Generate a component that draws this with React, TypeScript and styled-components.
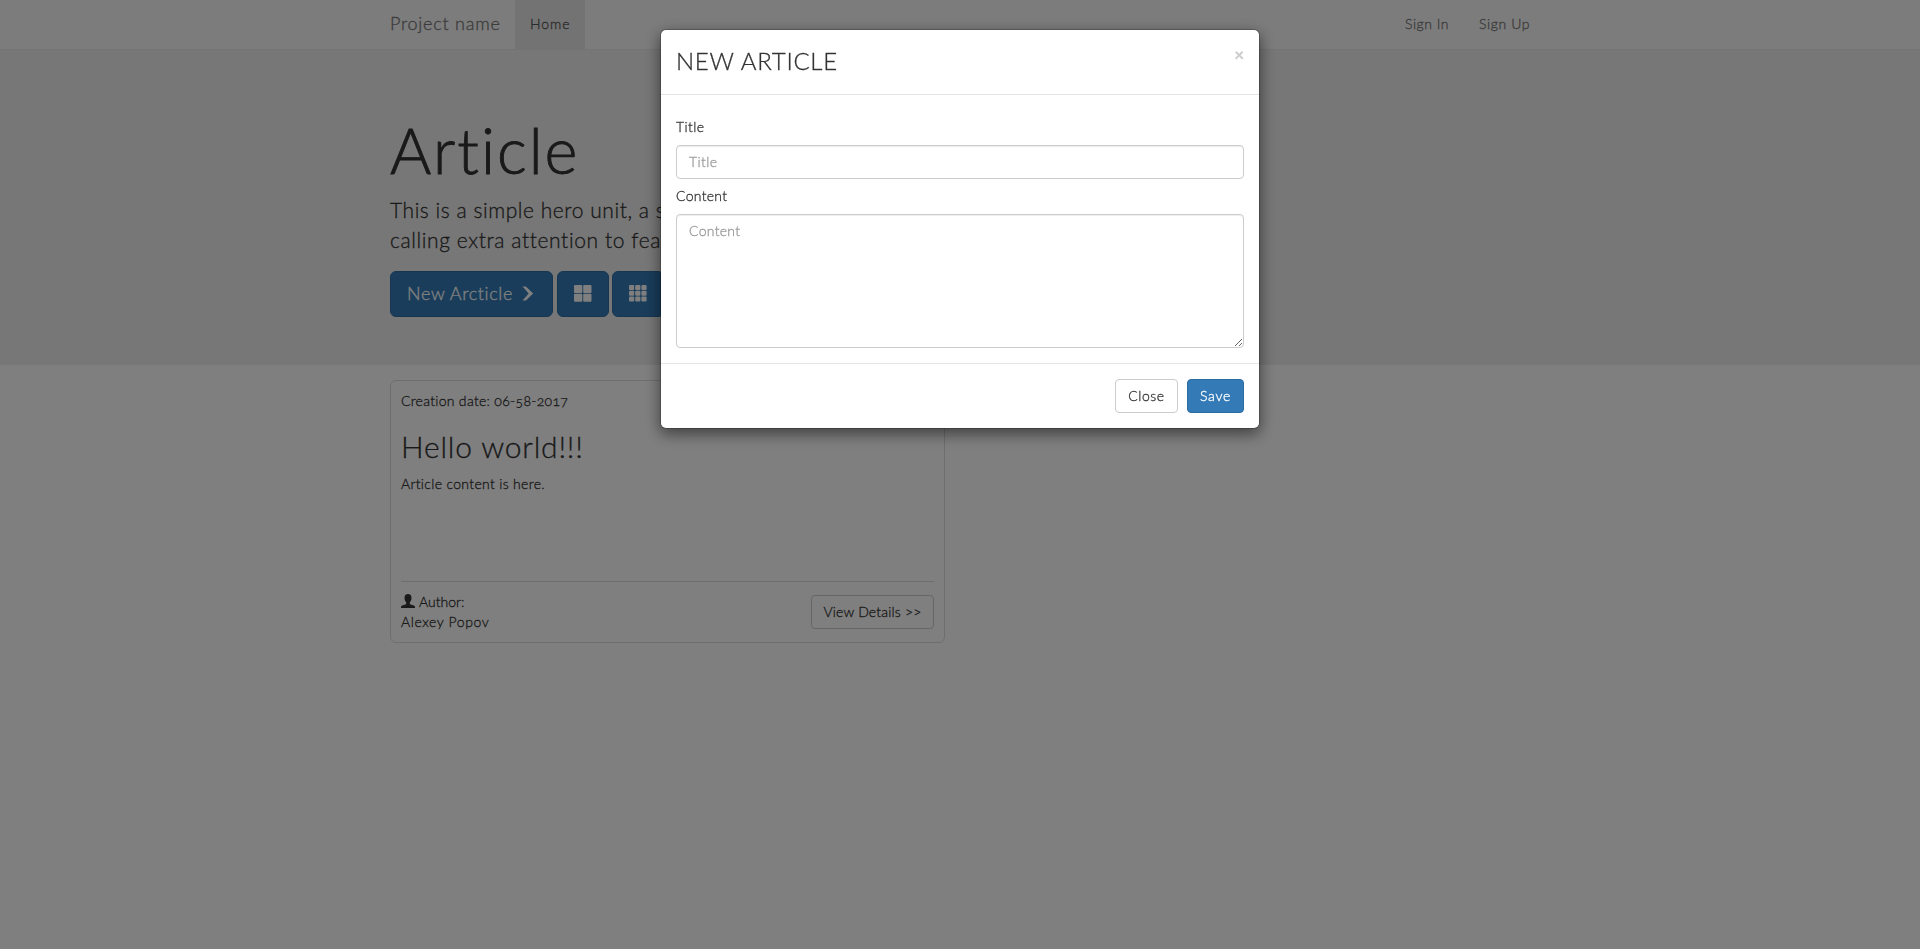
import React from 'react';
import styled, { createGlobalStyle } from 'styled-components';

const GlobalStyle = createGlobalStyle`
  *, *::before, *::after { box-sizing: border-box; }
  body {
    margin: 0;
    background: #fff;
    color: #333;
    font: 300 14px/20px Lato, "Liberation Sans", sans-serif;
    font-variant-ligatures: none;
    -webkit-text-stroke: 0.3px;
  }
  h1, h2, h3, p { margin: 0; font-weight: 300; }
  button, input, textarea { font: inherit; color: inherit; }
`;

const Spaced = styled.span<{ $gap: number }>`
  letter-spacing: ${p => p.$gap}px;
  white-space: nowrap;
`;

const Container = styled.div`
  width: 1170px;
  margin: 0 auto;
  padding: 0 15px;
`;

const Navbar = styled.nav`
  height: 50px;
  background: #f8f8f8;
  border-bottom: 1px solid #e7e7e7;
`;

const NavInner = styled(Container)`
  display: flex;
  height: 49px;
  padding-right: 0;
`;

const Brand = styled.a`
  width: 125px;
  padding: 13px 0;
  color: #777;
  font-size: 18px;
`;

const NavItem = styled.a<{ $width: number; $active?: boolean }>`
  width: ${p => p.$width}px;
  padding: 14px 15px;
  color: ${p => (p.$active ? '#555' : '#777')};
  background: ${p => (p.$active ? '#e7e7e7' : 'transparent')};
`;

const NavRight = styled.div`
  display: flex;
  margin-left: auto;
`;

const Jumbotron = styled.header`
  height: 315px;
  padding-top: 65px;
  background: #eee;
`;

const HeroTitle = styled.h1`
  font-size: 63px;
  line-height: 69px;
  -webkit-text-stroke: 0.9px;
`;

const Lead = styled.p`
  margin: 11px 0 16px;
  font-size: 21px;
  line-height: 30px;
`;

const HeroActions = styled.div`
  display: flex;
  gap: 3px;
`;

const HeroButton = styled.button<{ $width: number }>`
  display: flex;
  align-items: center;
  justify-content: center;
  width: ${p => p.$width}px;
  height: 46px;
  padding: 0 0 2px;
  color: #fff;
  background: #337ab7;
  border: 1px solid #2e6da4;
  border-radius: 6px;
  font-size: 18px;

  svg { display: block; fill: #fff; }
`;

const NewButton = styled(HeroButton)`
  justify-content: flex-start;
  gap: 9px;
  margin-right: 1px;
  padding-left: 16px;
`;

const Card = styled.article`
  width: 555px;
  margin-top: 15px;
  padding: 10px;
  border: 1px solid #ddd;
  border-radius: 6px;
`;

const DateLine = styled.div`
  font-variant-numeric: oldstyle-nums;
`;

const CardTitle = styled.h2`
  margin: 19px 0 11px;
  font-size: 30px;
  line-height: 33px;
`;

const CardBody = styled.p`
  height: 107px;
`;

const CardFooter = styled.footer`
  display: flex;
  justify-content: space-between;
  padding-top: 10px;
  border-top: 1px solid #ddd;
`;

const Author = styled.div`
  svg { display: inline-block; margin-right: 4px; vertical-align: -1px; fill: #333; }
`;

const Button = styled.button<{ $width: number; $primary?: boolean }>`
  width: ${p => p.$width}px;
  height: 34px;
  padding: 6px 0;
  line-height: 20px;
  text-align: center;
  color: ${p => (p.$primary ? '#fff' : '#333')};
  background: ${p => (p.$primary ? '#337ab7' : '#fff')};
  border: 1px solid ${p => (p.$primary ? '#2e6da4' : '#ccc')};
  border-radius: 4px;
`;

const DetailsButton = styled(Button)`
  margin-top: 3px;
`;

const Backdrop = styled.div`
  position: fixed;
  inset: 0;
  background: rgba(0, 0, 0, 0.5);
`;

const Modal = styled.section`
  width: 600px;
  margin: 29px auto;
  background: #fff;
  background-clip: padding-box;
  border: 1px solid rgba(0, 0, 0, 0.2);
  border-radius: 6px;
  box-shadow: 0 5px 15px rgba(0, 0, 0, 0.5);
`;

const ModalHeader = styled.div`
  display: flex;
  justify-content: space-between;
  height: 65px;
  padding: 18px 15px 0;
  border-bottom: 1px solid #e5e5e5;
`;

const ModalTitle = styled.h3`
  font-size: 24px;
  line-height: 25px;
`;

const CloseIcon = styled.button`
  height: 16px;
  margin-top: -2px;
  padding: 0;
  background: none;
  border: 0;
  color: #000;
  opacity: 0.2;
  font-size: 17px;
  font-weight: 900;
  line-height: 15px;
`;

const ModalBody = styled.div`
  display: flex;
  flex-direction: column;
  height: 268px;
  padding: 22px 15px 15px;
`;

const Label = styled.label`
  margin-bottom: 8px;
`;

const Input = styled.input<{ $gap: number }>`
  width: 100%;
  height: 34px;
  margin-bottom: 7px;
  padding: 5px 12px 7px;
  letter-spacing: ${p => p.$gap}px;
  border: 1px solid #ccc;
  border-radius: 4px;
  box-shadow: inset 0 1px 1px rgba(0, 0, 0, 0.075);
  outline: none;
  &::placeholder { color: #999; opacity: 1; }
`;

const TextArea = styled(Input).attrs({ as: 'textarea' })`
  display: block;
  height: 134px;
  margin: 0;
  padding: 6px 12px;
  resize: vertical;
`;

const ModalFooter = styled.div`
  display: flex;
  justify-content: flex-end;
  gap: 9px;
  padding: 15px;
  border-top: 1px solid #e5e5e5;
`;

const ChevronRight = () => (
  <svg width="12" height="15" viewBox="0 0 12 15">
    <path d="M0.5 0.4H3.9L11.2 7.4L3.9 14.5H0.5L6.7 7.4Z" />
  </svg>
);

const Grid = ({ cells, size, step }: { cells: number; size: number; step: number }) => (
  <svg width="18" height="17" viewBox="0 0 18 17">
    {Array.from({ length: cells * cells }, (_, i) => (
      <rect
        key={i}
        x={(i % cells) * step}
        y={Math.floor(i / cells) * (step - 0.4)}
        width={size}
        height={size - 0.3}
        rx="1"
      />
    ))}
  </svg>
);

const UserIcon = () => (
  <svg width="14" height="14" viewBox="0 0 14 14">
    <path d="M7 0C9.3 0 10.5 1.5 10.5 3.8C10.5 5.8 9.7 7.4 8.8 8.3V9.4C8.8 9.9 9.1 10.2 9.6 10.4L12.8 11.6C13.6 11.9 14 12.4 14 13.2V14H0V13.2C0 12.4 0.4 11.9 1.2 11.6L4.4 10.4C4.9 10.2 5.2 9.9 5.2 9.4V8.3C4.3 7.4 3.5 5.8 3.5 3.8C3.5 1.5 4.7 0 7 0Z" />
  </svg>
);

export default function App() {
  return (
    <>
      <GlobalStyle />
      <Navbar>
        <NavInner>
          <Brand><Spaced $gap={0.75}>Project name</Spaced></Brand>
          <NavItem $width={70} $active><Spaced $gap={0.9}>Home</Spaced></NavItem>
          <NavRight>
            <NavItem $width={74}><Spaced $gap={0.5}>Sign In</Spaced></NavItem>
            <NavItem $width={81}><Spaced $gap={0.6}>Sign Up</Spaced></NavItem>
          </NavRight>
        </NavInner>
      </Navbar>

      <Jumbotron>
        <Container>
          <HeroTitle><Spaced $gap={2}>Article</Spaced></HeroTitle>
          <Lead>
            <Spaced $gap={0.55}>This is a simple hero unit, a simple jumbotron-style component for</Spaced>
            <br />
            <Spaced $gap={0.6}>calling extra attention to featured content or information.</Spaced>
          </Lead>
          <HeroActions>
            <NewButton $width={163}>
              <Spaced $gap={0.63}>New Arcticle</Spaced>
              <ChevronRight />
            </NewButton>
            <HeroButton $width={52}><Grid cells={2} size={8.3} step={9.2} /></HeroButton>
            <HeroButton $width={52}><Grid cells={3} size={5.2} step={6.2} /></HeroButton>
          </HeroActions>
        </Container>
      </Jumbotron>

      <Container>
        <Card>
          <DateLine><Spaced $gap={0.3}>Creation date: 06-58-2017</Spaced></DateLine>
          <CardTitle><Spaced $gap={0.8}>Hello world!!!</Spaced></CardTitle>
          <CardBody><Spaced $gap={0.33}>Article content is here.</Spaced></CardBody>
          <CardFooter>
            <Author>
              <UserIcon />
              <Spaced $gap={0}>Author:</Spaced>
              <br />
              <Spaced $gap={0.6}>Alexey Popov</Spaced>
            </Author>
            <DetailsButton $width={123}><Spaced $gap={0.18}>View Details &gt;&gt;</Spaced></DetailsButton>
          </CardFooter>
        </Card>
      </Container>

      <Backdrop>
        <Modal>
          <ModalHeader>
            <ModalTitle><Spaced $gap={0.75}>NEW ARTICLE</Spaced></ModalTitle>
            <CloseIcon>×</CloseIcon>
          </ModalHeader>
          <ModalBody>
            <Label><Spaced $gap={0.4}>Title</Spaced></Label>
            <Input $gap={0.4} placeholder="Title" />
            <Label><Spaced $gap={0.3}>Content</Spaced></Label>
            <TextArea $gap={0.3} placeholder="Content" />
          </ModalBody>
          <ModalFooter>
            <Button $width={63}><Spaced $gap={0.55}>Close</Spaced></Button>
            <Button $width={57} $primary><Spaced $gap={0.75}>Save</Spaced></Button>
          </ModalFooter>
        </Modal>
      </Backdrop>
    </>
  );
}
